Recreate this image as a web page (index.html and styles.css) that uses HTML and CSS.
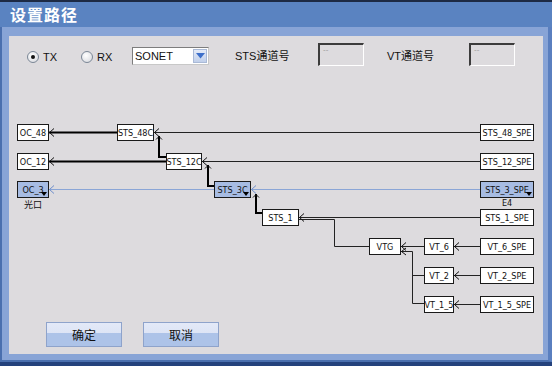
FILE: index.html
```html
<!DOCTYPE html>
<html lang="zh-CN">
<head>
  <meta charset="UTF-8">
  <title>设置路径</title>
  <link rel="stylesheet" href="styles.css">
</head>
<body>
  <div class="window">
    <div class="topstrip"></div>
    <div class="titlebar">设置路径</div>
    <div class="frame">
      <div class="panel">
        <div class="controls">
          <label class="radio radio-tx"><span class="circle on"></span>TX</label>
          <label class="radio radio-rx"><span class="circle"></span>RX</label>
          <div class="select">
            <span class="select-text">SONET</span>
            <span class="select-btn">
              <svg width="9" height="6" viewBox="0 0 9 6"><path d="M0 0 H9 L4.5 5.5 Z" fill="#3d6fca"/></svg>
            </span>
          </div>
          <span class="lbl lbl-sts">STS通道号</span>
          <div class="field"><span>--</span></div>
          <span class="lbl lbl-vt">VT通道号</span>
          <div class="field"><span>--</span></div>
        </div>

        <div class="diagram">
          <svg class="wires" width="534" height="210" viewBox="0 0 534 210">
            <g fill="none" stroke="#000" stroke-width="2">
              <path d="M40 26.5 H108"/>
              <path d="M150 30 V51 H157"/>
              <path d="M40 55.5 H157"/>
              <path d="M199 59 V80 H205"/>
              <path d="M247 88 V107 H253"/>
            </g>
            <g fill="none" stroke="#222" stroke-width="1">
              <path d="M145 26.5 H471"/>
              <path d="M193 55.5 H471"/>
              <path d="M290 111.5 H471"/>
              <path d="M290 113.5 H325.5 V140.5 H360"/>
              <path d="M392 140.5 H415"/>
              <path d="M445 140.5 H471"/>
              <path d="M392 145.5 H403.5 V197.5 H415"/>
              <path d="M403.5 169.5 H415"/>
              <path d="M445 169.5 H471"/>
              <path d="M445 198.5 H471"/>
            </g>
            <g fill="none" stroke="#8aa5d6" stroke-width="1">
              <path d="M40 83.5 H205"/>
              <path d="M242 83.5 H471"/>
            </g>
            <!-- arrow heads -->
            <g fill="none" stroke="#111" stroke-width="1">
              <polyline points="45,22.5 40.5,26.5 45,30.5"/>
              <polyline points="150,22.5 145.5,26.5 150,30.5"/>
              <polyline points="45,51.5 40.5,55.5 45,59.5"/>
              <polyline points="198,51.5 193.5,55.5 198,59.5"/>
              <polyline points="295,107.5 290.5,111.5 295,115.5"/>
              <polyline points="397,136.5 392.5,140.5 397,144.5"/>
              <polyline points="397,142 392.5,145.5 397,149"/>
              <polyline points="450,136.5 445.5,140.5 450,144.5"/>
              <polyline points="450,165.5 445.5,169.5 450,173.5"/>
              <polyline points="450,194.5 445.5,198.5 450,202.5"/>
              <polyline points="147,33.5 150,30.5 153,33.5"/>
              <polyline points="196,62.5 199,59.5 202,62.5"/>
              <polyline points="244,91.5 247,88.5 250,91.5"/>
            </g>
            <g fill="none" stroke="#6f8fcc" stroke-width="1">
              <polyline points="45,79.5 40.5,83.5 45,87.5"/>
              <polyline points="247,79.5 242.5,83.5 247,87.5"/>
            </g>
          </svg>

          <div class="node n-oc48">OC_48</div>
          <div class="node n-sts48c">STS_48C</div>
          <div class="node spe n-spe48">STS_48_SPE</div>

          <div class="node n-oc12">OC_12</div>
          <div class="node n-sts12c">STS_12C</div>
          <div class="node spe n-spe12">STS_12_SPE</div>

          <div class="node sel n-oc3">OC_3</div>
          <div class="node sel n-sts3c">STS_3C</div>
          <div class="node spe sel n-spe3">STS_3_SPE</div>
          <span class="tag tag-port">光口</span>
          <span class="tag tag-e4">E4</span>

          <div class="node n-sts1">STS_1</div>
          <div class="node spe n-spe1">STS_1_SPE</div>

          <div class="node n-vtg">VTG</div>
          <div class="node vt n-vt6">VT_6</div>
          <div class="node spe n-vt6spe">VT_6_SPE</div>
          <div class="node vt n-vt2">VT_2</div>
          <div class="node spe n-vt2spe">VT_2_SPE</div>
          <div class="node vt n-vt15">VT_1_5</div>
          <div class="node spe n-vt15spe">VT_1_5_SPE</div>
        </div>

        <div class="actions">
          <button class="btn">确定</button>
          <button class="btn">取消</button>
        </div>
      </div>
    </div>
    <div class="taskbar"></div>
  </div>
</body>
</html>
```

FILE: styles.css
```css
body {
  margin: 0;
  font-family: "Liberation Sans", "Noto Sans CJK SC", sans-serif;
}
.window {
  width: 552px;
  height: 366px;
  overflow: hidden;
  background: #5a83c1;
}
.topstrip {
  height: 2px;
  background: #1d2a44;
}
.titlebar {
  height: 25px;
  line-height: 24px;
  padding-left: 10px;
  background: #5a83c1;
  color: #fff;
  font-family: "Noto Sans CJK SC", sans-serif;
  font-size: 16px;
  font-weight: bold;
  letter-spacing: 1px;
}
.frame {
  height: 335px;
  box-sizing: border-box;
  padding: 9px 5px 6px 7px;
  background: #88a4d6;
  border-left: 2px solid #4a6fae;
  border-right: 4px solid #5a7fbf;
  border-bottom: 2px solid #4a6fae;
}
.panel {
  width: 534px;
  height: 318px;
  box-sizing: border-box;
  padding-top: 7px;
  background: #dddbde;
}
.controls {
  display: flex;
  align-items: center;
  height: 23px;
  padding-left: 18px;
  font-size: 11px;
  color: #111;
}
.radio {
  display: flex;
  align-items: center;
  gap: 4px;
  margin-top: 5px;
}
.radio-tx { width: 54px; }
.radio-rx { width: 51px; }
.circle {
  width: 12px;
  height: 12px;
  box-sizing: border-box;
  border: 1px solid #7b8796;
  border-radius: 50%;
  background: radial-gradient(circle at 40% 35%, #ffffff, #d4d6dc);
  position: relative;
}
.circle.on::after {
  content: "";
  position: absolute;
  left: 3px;
  top: 3px;
  width: 4px;
  height: 4px;
  border-radius: 50%;
  background: #111;
}
.select {
  display: flex;
  width: 77px;
  height: 18px;
  box-sizing: border-box;
  margin-top: 3px;
  border: 1px solid #7d7d7d;
  border-bottom-color: #c8c8c8;
  border-right-color: #c8c8c8;
  background: #fff;
}
.select-text {
  flex: 1;
  padding-left: 2px;
  line-height: 16px;
  font-size: 11px;
}
.select-btn {
  width: 14px;
  height: 14px;
  margin: 1px;
  box-sizing: border-box;
  border: 1px solid #a9b9d6;
  background: linear-gradient(#e4ebf8, #c0cfea);
  display: flex;
  align-items: center;
  justify-content: center;
}
.lbl {
  font-family: "Liberation Sans", "Noto Sans CJK SC", sans-serif;
  font-size: 11px;
}
.lbl-sts {
  margin-left: 26px;
  width: 83px;
}
.lbl-vt {
  margin-left: 23px;
  width: 82px;
}
.field {
  width: 46px;
  height: 23px;
  box-sizing: border-box;
  border: 2px solid #3c3c3c;
  border-right: 1px solid #fff;
  border-bottom: 1px solid #fff;
  padding: 1px 0 0 3px;
  font-size: 8px;
  color: #9a9a9a;
  line-height: 8px;
}
.diagram {
  position: relative;
  height: 210px;
  margin-top: 40px;
}
.wires {
  position: absolute;
  left: 0;
  top: 0;
}
.node {
  position: absolute;
  height: 17px;
  box-sizing: border-box;
  border: 1px solid #1a1a1a;
  background: #fff;
  display: flex;
  align-items: center;
  justify-content: center;
  font-family: "DejaVu Sans Condensed", "DejaVu Sans", sans-serif;
  font-size: 9px;
  color: #111;
  white-space: nowrap;
}
.node.sel {
  background: #a7bce3;
}
.node.sel::after {
  content: "";
  position: absolute;
  right: 1px;
  bottom: 1px;
  border-left: 3px solid transparent;
  border-right: 3px solid transparent;
  border-top: 4px solid #000;
}
.spe {
  left: 471px;
  width: 54px;
}
.n-oc48 { left: 8px; top: 18px; width: 32px; }
.n-sts48c { left: 108px; top: 18px; width: 37px; }
.n-spe48 { top: 18px; }
.n-oc12 { left: 8px; top: 47px; width: 32px; }
.n-sts12c { left: 157px; top: 47px; width: 36px; }
.n-spe12 { top: 47px; }
.n-oc3 { left: 8px; top: 75px; width: 32px; }
.n-sts3c { left: 205px; top: 75px; width: 37px; }
.n-spe3 { top: 75px; }
.n-sts1 { left: 253px; top: 103px; width: 37px; }
.n-spe1 { top: 103px; }
.n-vtg { left: 360px; top: 132px; width: 32px; }
.vt { left: 415px; width: 30px; }
.n-vt6 { top: 132px; }
.n-vt6spe { top: 132px; }
.n-vt2 { top: 161px; }
.n-vt2spe { top: 161px; }
.n-vt15 { top: 190px; }
.n-vt15spe { top: 190px; }
.tag {
  position: absolute;
  font-size: 9px;
  color: #111;
  font-family: "DejaVu Sans Condensed", "Noto Sans CJK SC", sans-serif;
}
.tag-port { left: 15px; top: 92px; }
.tag-e4 { left: 493px; top: 92px; }
.actions {
  display: flex;
  gap: 21px;
  margin-top: 6px;
  padding-left: 37px;
}
.btn {
  width: 76px;
  height: 25px;
  border: 1px solid #8ea3cb;
  background: linear-gradient(#e3e9f8 0%, #dde4f5 44%, #adc3e8 45%, #adc3e8 100%);
  font-family: "Noto Sans CJK SC", sans-serif;
  font-size: 12px;
  color: #111;
  padding: 0;
}
.taskbar {
  height: 4px;
  background: #24427c;
}
```
